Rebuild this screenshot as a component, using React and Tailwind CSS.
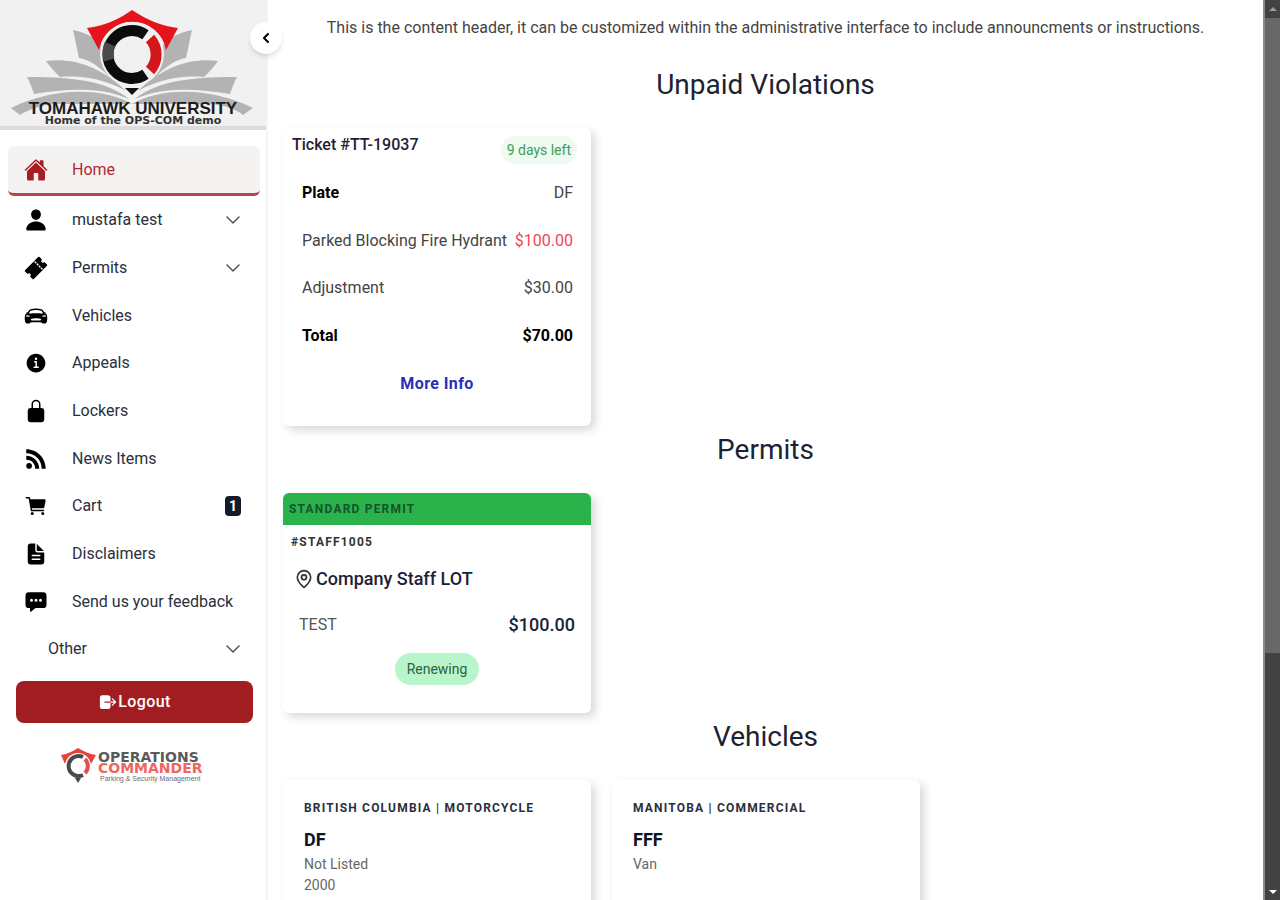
import {
    IoHome,
    IoPerson,
    IoTicket,
    IoCarSport,
    IoInformationCircle,
    IoLockClosed,
    IoLogoRss,
    IoCart,
    IoDocumentText,
    IoChatboxEllipses,
    IoLogOut,
} from 'react-icons/io5';
import { BsChevronDown } from 'react-icons/bs';
import { ChevronLeft, MapPin } from 'lucide-react';

const navItems = [
    { label: 'mustafa test', icon: IoPerson, expandable: true },
    { label: 'Permits', icon: IoTicket, expandable: true },
    { label: 'Vehicles', icon: IoCarSport },
    { label: 'Appeals', icon: IoInformationCircle },
    { label: 'Lockers', icon: IoLockClosed },
    { label: 'News Items', icon: IoLogoRss },
    { label: 'Cart', icon: IoCart, count: 1 },
    { label: 'Disclaimers', icon: IoDocumentText },
    { label: 'Send us your feedback', icon: IoChatboxEllipses },
];

const vehicles = [
    { type: 'BRITISH COLUMBIA | MOTORCYCLE', plate: 'DF', lines: ['Not Listed', '2000'] },
    { type: 'MANITOBA | COMMERCIAL', plate: 'FFF', lines: ['Van'] },
];

function UniversityLogo() {
    return (
        <svg viewBox="0 0 266 126" className="block w-full" role="img" aria-label="Tomahawk University">
            <g fill="#b3b3b3">
                <path d="M73 30 C84 32 94 37 101 43 L112 80 C100 66 88 59 79 58 C77 48 75 39 73 30Z" />
                <path d="M192 30 C181 32 171 37 164 43 L153 80 C165 66 177 59 186 58 C188 48 190 39 192 30Z" />
                <path d="M46 61 C70 58 98 64 126 91 C106 80 85 75 60 77 C55 72 50 67 46 61Z" />
                <path d="M218 61 C194 58 166 64 138 91 C158 80 179 75 204 77 C209 72 214 67 218 61Z" />
                <path d="M27 77 C60 77 104 78 129 99 C100 86 65 89 34 94 C32 88 30 82 27 77Z" />
                <path d="M237 77 C204 77 160 78 135 99 C164 86 199 89 230 94 C232 88 234 82 237 77Z" />
                <path d="M11 108 C55 86 105 88 132 104 C159 88 209 86 253 108 L243 115 C236 109 224 105 210 104 L55 104 C40 105 30 109 20 115Z" />
            </g>
            <path d="M132 10 C147 20 161 26 178 28 L166 50 A34 34 0 0 0 99 50 L87 28 C104 26 118 20 132 10Z" fill="#e5131b" />
            <circle cx="132" cy="54" r="32" fill="#f1f1f1" />
            <g fill="none" strokeWidth="11">
                <path d="M145.500 34.700 A24 24 0 1 0 145.500 74.300" stroke="#0c0c0c" />
                <path d="M110 44 A24 24 0 0 0 109 60" stroke="#4a4a4a" />
                <path d="M150 38.500 A24 24 0 0 1 150 70.500" stroke="#d3171d" />
            </g>
            <path d="M125 88 L139 88 L132 95Z" fill="#111111" />
            <text x="133" y="114" textAnchor="middle" fontSize="17" fontWeight="700" fill="#1c1c1c" className="font-['Liberation_Sans',sans-serif]">
                TOMAHAWK UNIVERSITY
            </text>
            <text x="133" y="124" textAnchor="middle" fontSize="11" fontWeight="700" fill="#333333" className="font-['DejaVu_Sans',sans-serif]">
                Home of the OPS-COM demo
            </text>
        </svg>
    );
}

function OperationsLogo() {
    return (
        <svg viewBox="0 0 150 38" className="w-[150px]" role="img" aria-label="Operations Commander">
            <path d="M18 1 C23 4 29 7 36 8 L31 17 A14 14 0 0 0 5 17 L1 8 C8 7 13 4 18 1Z" fill="#e8403a" />
            <circle cx="18" cy="19" r="13" fill="#ffffff" />
            <g fill="none" strokeWidth="4">
                <path d="M23 10 A10 10 0 1 0 23 28" stroke="#4a4a4a" />
                <path d="M25 12 A10 10 0 0 1 25 26" stroke="#e2504b" />
            </g>
            <path d="M15 31 L21 31 L18 36Z" fill="#4a4a4a" />
            <text x="38" y="15" fontSize="14" fontWeight="700" fill="#5a5a5a" className="font-['DejaVu_Sans',sans-serif]">OPERATIONS</text>
            <text x="38" y="26" fontSize="14" fontWeight="700" fill="#f0645f" className="font-['DejaVu_Sans',sans-serif]">COMMANDER</text>
            <text x="40" y="34" fontSize="7" fill="#6b6b6b" className="font-['Liberation_Sans',sans-serif]">Parking &amp; Security Management</text>
        </svg>
    );
}

function NavItem({ label, icon: Icon, expandable, count }) {
    const content = (
        <>
            <Icon className="size-6 shrink-0 text-black" />
            <span className="flex-1 pl-6 text-left whitespace-nowrap">{label}</span>
            {expandable && <BsChevronDown className="size-4 text-[#444444]" strokeWidth={0.5} />}
            {count && <span className="rounded bg-[#141a2a] px-1 text-sm font-bold text-white">{count}</span>}
        </>
    );
    const row = 'flex h-full w-full items-center pl-6 pr-[25px]';
    return (
        <li className="h-12 nth-[3n]:h-[47px]">
            {expandable ? <button type="button" className={row}>{content}</button> : <a href="#" className={row}>{content}</a>}
        </li>
    );
}

function Sidebar() {
    return (
        <aside className="relative w-[268px] shrink-0 border-r-2 border-gray-100">
            <div className="border-b-4 border-[#dcdcdc] bg-[#f1f1f1]">
                <UniversityLogo />
            </div>
            <button type="button" aria-label="Collapse menu" className="absolute top-[22px] -right-4 z-10 flex size-8 items-center justify-center rounded-full bg-white text-black shadow-md">
                <ChevronLeft className="size-4" strokeWidth={3} />
            </button>
            <nav className="pt-4 text-base text-[#2b2f3d]">
                <a href="#" aria-current="page" className="mr-1.5 ml-2 flex h-[50px] items-center rounded-md border-b-3 border-[#b8434a] bg-[#f4f3f2] pl-4 text-[#b02a32]">
                    <IoHome className="size-6 text-[#a81c22]" />
                    <span className="pl-6">Home</span>
                </a>
                <ul>
                    {navItems.map((item) => (
                        <NavItem key={item.label} {...item} />
                    ))}
                    <li>
                        <button type="button" className="flex h-12 w-full items-center justify-between pr-[25px] pl-12">
                            Other
                            <BsChevronDown className="size-4 text-[#444444]" strokeWidth={0.5} />
                        </button>
                    </li>
                </ul>
            </nav>
            <div className="pt-2 pr-[13px] pl-4">
                <button type="button" className="flex h-[42px] w-full items-center justify-center rounded-lg bg-[#a11d21] font-medium tracking-wide text-white">
                    <IoLogOut className="size-5" />
                    Logout
                </button>
            </div>
            <div className="flex justify-center pt-6 pl-1">
                <OperationsLogo />
            </div>
        </aside>
    );
}

function Card({ className = '', children }) {
    return <article className={`w-[308px] rounded-md bg-white shadow-[4px_4px_10px_rgba(0,0,0,0.16)] ${className}`}>{children}</article>;
}

function Section({ title, className = 'pt-2', children }) {
    return (
        <section className={className}>
            <h2 className="text-center text-[28px] leading-8 text-[#1d2233]">{title}</h2>
            <div className="flex gap-[21px] pt-[27px]">{children}</div>
        </section>
    );
}

function TicketCard() {
    return (
        <Card className="h-[298px]">
            <header className="flex items-start justify-between pt-[5px] pr-3.5 pb-[5px] pl-[9px]">
                <h3 className="text-base font-medium text-[#1d2233]">Ticket #TT-19037</h3>
                <span className="mt-[3px] rounded-full bg-[#effaf1] px-1.5 py-1 text-sm text-[#3f9d55]">9 days left</span>
            </header>
            <table className="w-full text-base text-[#444444]">
                <tbody>
                    <tr className="h-12">
                        <th scope="row" className="pl-[19px] text-left font-bold text-black">Plate</th>
                        <td className="pr-[18px] text-right">DF</td>
                    </tr>
                    <tr className="h-[47px]">
                        <td className="pl-[19px] whitespace-nowrap">Parked Blocking Fire Hydrant</td>
                        <td className="pr-[18px] text-right text-[#ef4458]">$100.00</td>
                    </tr>
                    <tr className="h-12">
                        <td className="pl-[19px]">Adjustment</td>
                        <td className="pr-[18px] text-right">$30.00</td>
                    </tr>
                    <tr className="h-12 font-bold text-black">
                        <th scope="row" className="pl-[19px] text-left">Total</th>
                        <td className="pr-[18px] text-right">$70.00</td>
                    </tr>
                </tbody>
            </table>
            <div className="pt-3 text-center">
                <a href="#" className="font-bold tracking-wide text-[#2a2fb8]">More Info</a>
            </div>
        </Card>
    );
}

function PermitCard() {
    return (
        <Card className="h-[220px]">
            <header className="flex h-8 items-center rounded-t-md bg-[#29b34a] pl-1.5 text-xs font-bold tracking-widest text-[#14532d]">
                STANDARD PERMIT
            </header>
            <p className="pt-[9px] pl-2 text-xs font-bold tracking-widest text-[#333333]">#STAFF1005</p>
            <h3 className="flex items-center gap-0.5 pt-[15px] pl-[11px] text-lg font-medium text-[#1d2233]">
                <MapPin className="size-5 text-[#333333]" strokeWidth={2} />
                Company Staff LOT
            </h3>
            <div className="flex items-center justify-between pt-[18px] pr-4 pl-4">
                <span className="text-[#555555]">TEST</span>
                <span className="text-lg font-medium text-[#1d2233]">$100.00</span>
            </div>
            <div className="flex justify-center pt-3.5">
                <span className="rounded-full bg-[#b9f5cb] px-3 py-1.5 text-sm text-[#2f5f3f]">Renewing</span>
            </div>
        </Card>
    );
}

function VehicleCard({ type, plate, lines }) {
    return (
        <Card className="h-[180px] px-[21px] pt-5">
            <p className="text-xs font-bold tracking-widest text-[#2b2f3d]">{type}</p>
            <h3 className="pt-2.5 text-lg font-bold text-[#11131f]">{plate}</h3>
            {lines.map((line) => (
                <p key={line} className="text-sm leading-[21px] text-[#666666]">{line}</p>
            ))}
        </Card>
    );
}

function ScrollBar() {
    return (
        <div aria-hidden="true" className="flex w-[17px] shrink-0 flex-col border-l-2 border-[#8a8a8a] bg-[#424242]">
            <div className="flex h-[18px] items-center justify-center">
                <span className="border-x-4 border-b-4 border-x-transparent border-b-[#9a9a9a]" />
            </div>
            <div className="h-[635px] bg-[#686868]" />
            <div className="flex flex-1 items-end justify-center pb-1.5">
                <span className="border-x-4 border-t-4 border-x-transparent border-t-white" />
            </div>
        </div>
    );
}

export default function App() {
    return (
        <div className="flex h-screen overflow-hidden bg-white font-[Roboto,sans-serif]">
            <Sidebar />
            <main className="min-w-0 flex-1 overflow-hidden px-[15px]">
                <p className="pt-4 text-center text-base text-[#444444]">
                    This is the content header, it can be customized within the administrative interface to include announcments or instructions.
                </p>
                <Section title="Unpaid Violations" className="pt-[29px]">
                    <TicketCard />
                </Section>
                <Section title="Permits">
                    <PermitCard />
                </Section>
                <Section title="Vehicles">
                    {vehicles.map((vehicle) => (
                        <VehicleCard key={vehicle.plate} {...vehicle} />
                    ))}
                </Section>
            </main>
            <ScrollBar />
        </div>
    );
}
